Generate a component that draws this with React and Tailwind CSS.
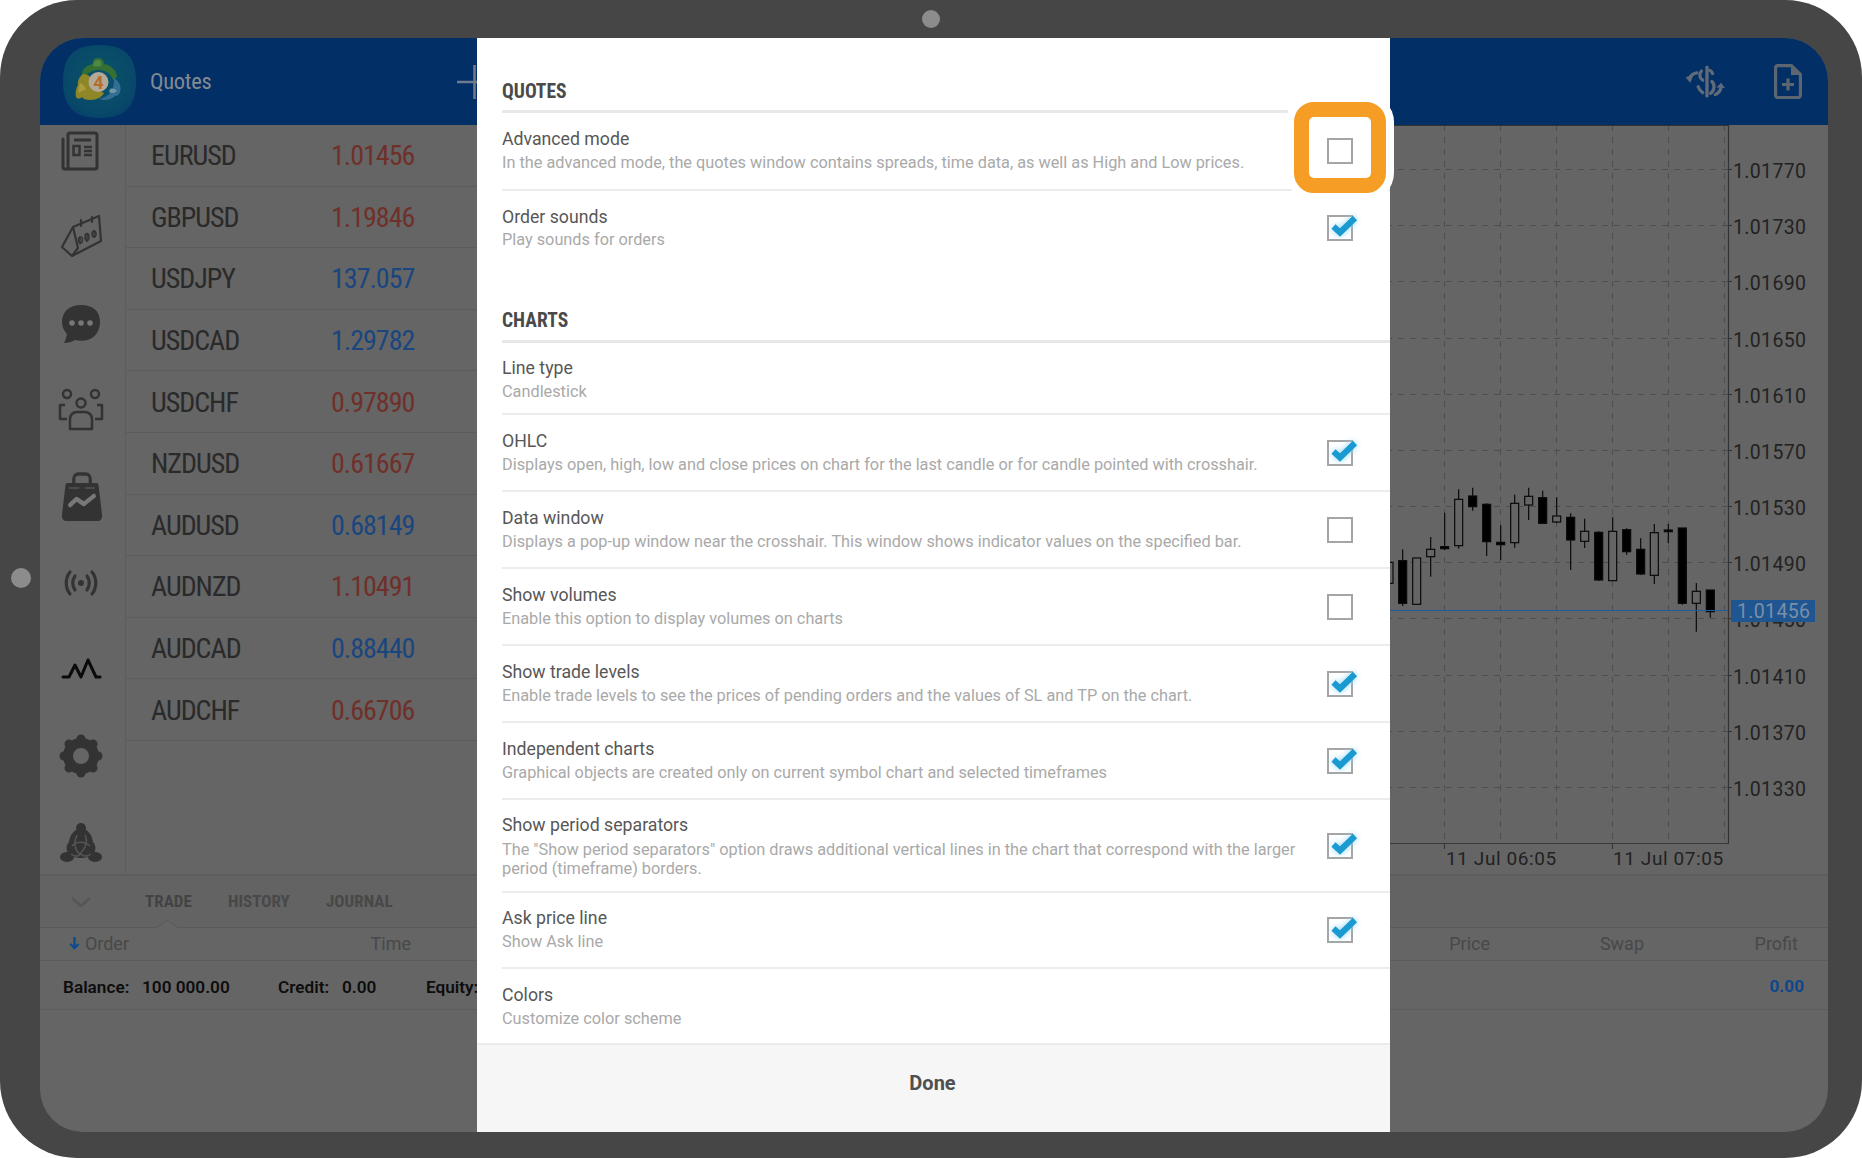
const cond = "[font-stretch:75%]";

const QUOTES = [
  ["EURUSD", "1.01456", "r"],
  ["GBPUSD", "1.19846", "r"],
  ["USDJPY", "137.057", "b"],
  ["USDCAD", "1.29782", "b"],
  ["USDCHF", "0.97890", "r"],
  ["NZDUSD", "0.61667", "r"],
  ["AUDUSD", "0.68149", "b"],
  ["AUDNZD", "1.10491", "r"],
  ["AUDCAD", "0.88440", "b"],
  ["AUDCHF", "0.66706", "r"],
];

const CANDLES = [
  [27, 307, 370, 307, 370, 0],
  [68, 268, 438, 302, 430, 1],
  [110, 294, 433, 294, 433, 0],
  [152, 231, 350, 268, 290, 0],
  [194, 158, 270, 260, 266, 1],
  [236, 88, 266, 118, 257, 0],
  [278, 83, 152, 108, 140, 1],
  [320, 130, 288, 133, 245, 1],
  [362, 196, 300, 247, 254, 1],
  [404, 104, 263, 130, 248, 0],
  [446, 83, 180, 109, 135, 0],
  [488, 92, 190, 113, 190, 1],
  [530, 112, 190, 168, 186, 0],
  [572, 160, 330, 172, 240, 1],
  [614, 176, 264, 214, 244, 0],
  [656, 214, 363, 217, 360, 1],
  [698, 172, 363, 214, 362, 0],
  [740, 205, 284, 209, 275, 1],
  [782, 235, 345, 268, 342, 1],
  [823, 192, 372, 218, 346, 0],
  [865, 192, 250, 210, 215, 1],
  [907, 204, 434, 204, 430, 1],
  [949, 369, 515, 394, 430, 0],
  [991, 390, 473, 390, 455, 1],
];

const PRICES = [
  ["1.01770", 169], ["1.01730", 225], ["1.01690", 281], ["1.01650", 338], ["1.01610", 394], ["1.01570", 450],
  ["1.01530", 506], ["1.01490", 562], ["1.01450", 618], ["1.01410", 675], ["1.01370", 731], ["1.01330", 787],
];

function Chart() {
  const vx = [1444, 1500, 1556, 1612, 1668, 1724];
  return (
    <svg viewBox="486 125 1342 748" className="block w-full h-full" style={{ fontFamily: "Roboto, sans-serif" }}>
      {PRICES.map(([p, y]) => (
        <g key={p}>
          <line x1="486" x2="1728" y1={y + 0.5} y2={y + 0.5} stroke="#4e4e4e" strokeWidth="1" strokeDasharray="6 6" />
          <line x1="1728" x2="1732" y1={y + 0.5} y2={y + 0.5} stroke="#2e2e2e" strokeWidth="1" />
        </g>
      ))}
      {vx.map((x) => (
        <line key={x} x1={x + 0.5} x2={x + 0.5} y1="125" y2="844" stroke="#4e4e4e" strokeWidth="1" strokeDasharray="6 6" />
      ))}
      <line x1="486" x2="1729" y1="125.5" y2="125.5" stroke="#333" strokeWidth="1" />
      <line x1="486" x2="1729" y1="843.5" y2="843.5" stroke="#3a3a3a" strokeWidth="1.2" />
      <line x1="1728.5" x2="1728.5" y1="125" y2="844" stroke="#333" strokeWidth="1.2" />
      <line x1="1444.5" x2="1444.5" y1="844" y2="849" stroke="#333" />
      <line x1="1612.5" x2="1612.5" y1="844" y2="849" stroke="#333" />
      {CANDLES.map(([cx, wt, wb, bt, bb, f]) => {
        const x = 1380 + cx / 3;
        return (
          <g key={cx}>
            <line x1={x} x2={x} y1={460 + wt / 3} y2={460 + wb / 3} stroke="#0a0a0a" strokeWidth="1.2" />
            <rect x={x - 4} y={460 + bt / 3} width="8" height={Math.max((bb - bt) / 3, 1)} fill={f ? "#000" : "#656565"} stroke="#0a0a0a" strokeWidth="1.2" />
          </g>
        );
      })}
      <line x1="486" x2="1728" y1="610.5" y2="610.5" stroke="#1f5c9e" strokeWidth="1.2" />
      {PRICES.map(([p, y]) => (
        <text key={p} x="1733" y={y + 8.5} fontSize="19.5" letterSpacing="0.35" fill="#222">{p}</text>
      ))}
      <rect x="1731" y="600" width="84" height="22" fill="#1f5590" />
      <text x="1737" y="618" fontSize="19.5" letterSpacing="0.35" fill="#7a90a9">1.01456</text>
      <text x="1446" y="865" fontSize="19" letterSpacing="0.6" fill="#222">11 Jul 06:05</text>
      <text x="1613" y="865" fontSize="19" letterSpacing="0.6" fill="#222">11 Jul 07:05</text>
    </svg>
  );
}

function Logo() {
  return (
    <svg viewBox="0 0 73 73" className="w-[73px] h-[73px] shrink-0">
      <defs>
        <radialGradient id="lg" cx="0.5" cy="0.45" r="0.7">
          <stop offset="0" stopColor="#0a5568" />
          <stop offset="0.7" stopColor="#084869" />
          <stop offset="1" stopColor="#04386b" />
        </radialGradient>
      </defs>
      <path d="M36.500 0C62 0 73 11 73 36.500C73 62 62 73 36.500 73C11 73 0 62 0 36.500C0 11 11 0 36.500 0Z" fill="url(#lg)" />
      <path d="M35 13c4 0 6 3 6 6 7 1 13 7 13 13l-4 3c-3-8-9-10-15-10s-11 3-13 8c-2-1-3-3-3-5 1-5 6-8 11-9-1-3 1-6 5-6Z" fill="#347034" />
      <path d="M35 15c3 0 4 3 3 6-3 1-6 1-8 0 0-3 2-6 5-6Z" fill="#4f8744" />
      <path d="M20 29c3 0 6 1 8 4 3 6 7 12 13 15-2 4-7 7-14 7-4 0-7-1-8-3-2 2-5 2-6 0-1-4 0-9 2-12-1-4 2-9 5-11Z" fill="#8f8628" />
      <path d="M17 38c3 1 5 3 6 7-3 0-5 1-7 3-1-3 0-7 1-10Z" fill="#a89c3c" />
      <path d="M51 33c5 3 8 9 6 14-1 3-3 4-5 4-4 4-10 5-16 3 8-2 13-6 14-12 1-3 1-6 1-9Z" fill="#336d96" />
      <path d="M47 44c3-1 6 0 7 2-2 2-5 3-8 1Z" fill="#6f95a9" />
      <circle cx="35.500" cy="37" r="10" fill="#b3a99b" />
      <text x="35.500" y="43.500" textAnchor="middle" fontSize="18" fontWeight="700" fill="#b96c28" style={{ fontFamily: "Roboto, sans-serif" }}>4</text>
    </svg>
  );
}

const ic = "w-[48px] h-[44px] shrink-0";
function SideIcons() {
  const s = "#333333";
  return (
    <>
      <svg viewBox="0 0 48 44" className={ic} fill="none" stroke={s}>
        <path d="M6 10v28a2 2 0 0 0 2 2h4" strokeWidth="3" strokeLinecap="round" />
        <rect x="11" y="4" width="29" height="36" rx="2" strokeWidth="3" />
        <path d="M17 11h17" strokeWidth="3" />
        <rect x="16.500" y="17" width="6" height="9" strokeWidth="2.500" />
        <path d="M27 18h8M27 22h8M27 26h8" strokeWidth="2.500" />
      </svg>
      <svg viewBox="0 0 48 44" className={ic} fill="none" stroke={s} strokeWidth="2.200" strokeLinejoin="round">
        <path d="M5 32 16 12 42 1 44 26 15 41 5 32Z" />
        <path d="M16 12 21 33 15 41" />
        <path d="M24 5v6M35 2v5" strokeLinecap="round" />
        <path d="M23 21.500v8M30 18v9M37 15v8" strokeWidth="1.500" />
        <ellipse cx="23.500" cy="25" rx="2" ry="3" strokeWidth="1.500" />
        <ellipse cx="30" cy="22" rx="2" ry="3.500" strokeWidth="1.500" />
        <ellipse cx="37" cy="19" rx="2" ry="3" strokeWidth="1.500" />
      </svg>
      <svg viewBox="0 0 48 44" className={ic}>
        <path d="M24 3C12 3 5 10 5 20c0 5 2 9 5 12-.5 3-2 7-3 9 4 0 8-1 11-3 2 .6 4 .8 6 .8 12 0 19-8 19-18.800S36 3 24 3Z" fill={s} />
        <circle cx="15" cy="21" r="2.800" fill="#777" />
        <circle cx="24" cy="21" r="2.800" fill="#777" />
        <circle cx="33" cy="21" r="2.800" fill="#777" />
      </svg>
      <svg viewBox="0 0 48 44" className={ic} fill="none" stroke={s} strokeWidth="2.500">
        <circle cx="10" cy="6" r="4" />
        <circle cx="38" cy="6" r="4" />
        <circle cx="24" cy="15" r="4.500" />
        <path d="M8 17H3v14h7M40 17h5v14h-7" strokeLinejoin="round" />
        <path d="M13 41V31c0-4 3-7 7-7h8c4 0 7 3 7 7v10H13Z" strokeLinejoin="round" />
      </svg>
      <svg viewBox="0 0 48 50" preserveAspectRatio="none" className="w-[44px] h-[50px] -my-[3px] ml-[3px] shrink-0">
        <path d="M8 11h32c1 0 2 1 2 2l4 31c0 3-2 5-5 5H7c-3 0-5-2-5-5l4-31c0-1 1-2 2-2Z" fill={s} />
        <path d="M15 16V7c0-3 2-5 5-5h8c3 0 5 2 5 5v9" fill="none" stroke={s} strokeWidth="3.500" />
        <path d="M10 16h11M27 16h11" stroke="#666" strokeWidth="1" />
        <path d="M11 33l7-6 8 5 11-8" fill="none" stroke="#777" strokeWidth="4.500" strokeLinecap="round" strokeLinejoin="round" />
      </svg>
      <svg viewBox="0 0 48 44" className={ic} fill="none" stroke={s} strokeWidth="3.200" strokeLinecap="round">
        <circle cx="24" cy="22" r="3" fill={s} stroke="none" />
        <path d="M18 15c-3 4-3 10 0 14M30 15c3 4 3 10 0 14" />
        <path d="M13 11C8 17 8 27 13 33M35 11c5 6 5 16 0 22" />
      </svg>
      <svg viewBox="0 0 48 44" className={ic} fill="none" stroke="#0a0a0a" strokeWidth="3" strokeLinecap="round" strokeLinejoin="round">
        <path d="M6 30h6l6-12 6 12 7-17 8 17h4" />
      </svg>
      <svg viewBox="0 0 48 44" className={ic}>
        <circle cx="24" cy="22" r="13" fill="none" stroke={s} strokeWidth="10" />
        {[0, 45, 90, 135, 180, 225, 270, 315].map((a) => (
          <line key={a} x1="24" y1="6" x2="24" y2="5" stroke={s} strokeWidth="9" strokeLinecap="round" transform={`rotate(${a} 24 22)`} />
        ))}
      </svg>
      <svg viewBox="0 0 48 44" className={ic}>
        <circle cx="24" cy="8" r="5" fill={s} />
        <path d="M24 8c6 1 11 6 12 14 3 3 3 8 1 11-4 4-9 5-13 5s-9-1-13-5c-2-3-2-8 1-11 1-8 6-13 12-14Z" fill={s} />
        <ellipse cx="10" cy="37" rx="7" ry="5" fill={s} />
        <ellipse cx="38" cy="37" rx="7" ry="5" fill={s} />
        <path d="M15 26c4-5 13-5 18 0M20 15c-3 6-3 13 2 19M28 15c3 6 1 14-6 19M14 34c4 3 7 3 10 0 3 3 6 3 10 0" fill="none" stroke="#555" strokeWidth="1.500" />
      </svg>
    </>
  );
}

function Check({ on }) {
  return (
    <div className="relative w-[26px] h-[26px] border-2 border-[#a5a5a5] shrink-0">
      {on && (
        <svg viewBox="0 0 34 24" className="absolute -left-[2px] -top-[2px] w-[34px] h-[24px] overflow-visible drop-shadow-[0_0_3px_#8fd6f5]" fill="none" stroke="#1b9ad1" strokeWidth="6">
          <path d="M6.500 11.500l6.500 6L28 3" />
        </svg>
      )}
    </div>
  );
}

function Row({ title, sub, on, h, last, box = true, text = "mb-[2px]", gap = "mt-[2px]" }) {
  return (
    <div className={`${h} ml-[25px] pr-[37px] flex items-center ${last ? "" : "border-b-2 border-[#ececec]"}`}>
      <div className={`flex-1 ${text}`}>
        <div className="text-[17.700px] leading-[23px] text-[#575757]">{title}</div>
        <div className={`${gap} text-[16.300px] leading-[19px] text-[#a9a9a9]`}>{sub}</div>
      </div>
      {box && <Check on={on} />}
    </div>
  );
}

function Modal() {
  return (
    <div className="absolute left-[437px] top-0 w-[913px] h-[1094px] bg-white flex flex-col">
      <div className="h-[75px] ml-[25px] flex items-end border-b-[3px] border-[#e8e8e8] pb-[6px]">
        <span className={`text-[19.500px] leading-[24px] font-bold text-[#4a4a4a] ${cond}`}>QUOTES</span>
      </div>
      <Row h="h-[78px]" title="Advanced mode" sub="In the advanced mode, the quotes window contains spreads, time data, as well as High and Low prices." />
      <Row h="h-[74px]" last on text="mb-[1px]" gap="mt-[1px]" title="Order sounds" sub="Play sounds for orders" />
      <div className="h-[78px] ml-[25px] flex items-end border-b-[3px] border-[#e8e8e8] pb-[7px]">
        <span className={`text-[19.500px] leading-[24px] font-bold text-[#4a4a4a] ${cond}`}>CHARTS</span>
      </div>
      <Row h="h-[72px]" box={false} text="mt-[2px]" title="Line type" sub="Candlestick" />
      <Row h="h-[77px]" on title="OHLC" sub="Displays open, high, low and close prices on chart for the last candle or for candle pointed with crosshair." />
      <Row h="h-[77px]" title="Data window" sub="Displays a pop-up window near the crosshair. This window shows indicator values on the specified bar." />
      <Row h="h-[77px]" title="Show volumes" sub="Enable this option to display volumes on charts" />
      <Row h="h-[77px]" on title="Show trade levels" sub="Enable trade levels to see the prices of pending orders and the values of SL and TP on the chart." />
      <Row h="h-[77px]" on title="Independent charts" sub="Graphical objects are created only on current symbol chart and selected timeframes" />
      <Row
        h="h-[93px]"
        on
        text=""
        gap="mt-[3px]"
        title="Show period separators"
        sub={
          <>
            The "Show period separators" option draws additional vertical lines in the chart that correspond with the larger
            <br />
            period (timeframe) borders.
          </>
        }
      />
      <Row h="h-[76px]" on title="Ask price line" sub="Show Ask line" />
      <Row h="h-[74px]" last box={false} text="" title="Colors" sub="Customize color scheme" />
      <div className="flex-1 bg-[#f6f6f6] border-t-2 border-[#ebebeb] flex items-center justify-center pb-[11px] pr-[2px]">
        <span className="text-[20px] font-bold text-[#4f4f4f]">Done</span>
      </div>
      <div className="absolute left-[817px] top-[64px] w-[92px] h-[91px] rounded-[20px] border-[15px] border-[#f59d24] shadow-[0_0_0_8px_white]" />
    </div>
  );
}

export default function App() {
  return (
    <div className="relative w-[1862px] h-[1158px] bg-white overflow-hidden" style={{ fontFamily: "Roboto, 'Liberation Sans', sans-serif" }}>
      <div className="w-full h-full rounded-[77px] bg-[#464646] pt-[38px] pl-[40px] pr-[34px] pb-[26px]">
        <div className="relative w-[1788px] h-[1094px] rounded-[43px] overflow-hidden bg-[#656565] flex flex-col">
          <header className="h-[87px] shrink-0 bg-[#012f66] flex items-center pl-[23px] pr-[26px]">
            <Logo />
            <span className={`ml-[14px] text-[22.500px] tracking-[-0.3px] text-[#858a92] ${cond}`}>Quotes</span>
            <svg viewBox="0 0 24 34" className="ml-[246px] w-[24px] h-[34px] shrink-0" stroke="#6e7d8e" strokeWidth="2.500">
              <path d="M0 17h24M17.500 0v34" />
            </svg>
            <svg viewBox="30 12 128 100" className="ml-auto w-[42px] h-[33px]" fill="none" stroke="#5f6b79" strokeWidth="10" strokeLinecap="round">
              <path d="M97 18V106" />
              <path d="M80 30c-8 10-6 22 4 28" />
              <path d="M105 28c5 2 8 6 9 10" />
              <path d="M112 62c10 10 8 28-4 36" />
              <path d="M70 78c3 8 8 14 14 18" />
              <path d="M66 36c-12 2-20 9-22 18" />
              <path d="M122 102c9-4 16-12 18-22" />
              <path d="M32 50l26-12-12 28ZM152 82l-26-2 14-14Z" fill="#5f6b79" stroke="none" />
            </svg>
            <svg viewBox="0 0 28 35" className="ml-[47px] w-[28px] h-[35px]" fill="none" stroke="#5d6670" strokeWidth="3.200">
              <path d="M3.500 1.600h14L26.400 10.500v20.500a2.500 2.500 0 0 1-2.500 2.500H4A2.500 2.500 0 0 1 1.600 31V4A2.500 2.500 0 0 1 3.500 1.600Z" strokeLinejoin="round" />
              <path d="M17 2l9 9h-9Z" fill="#5d6670" stroke="none" />
              <path d="M14 14.500v12M8 20.500h12" />
            </svg>
          </header>

          <div className="h-[748px] shrink-0 flex">
            <nav className="w-[86px] shrink-0 border-r border-[#5c5c5c] flex flex-col items-center pt-[4px] pr-[4px] gap-[42.400px] overflow-hidden">
              <SideIcons />
            </nav>
            <div className="w-[360px] shrink-0">
              {QUOTES.map(([s, p, c]) => (
                <div key={s} className="h-[61.600px] border-b border-[#5c5c5c] pl-[25px] flex items-center text-[28px] tracking-[-1px] pt-[2px]">
                  <span className={`w-[180px] text-[#2a2a2a] ${cond}`}>{s}</span>
                  <span className={`w-[81px] text-right ${c === "r" ? "text-[#70302a]" : "text-[#1a4680]"} ${cond}`}>{p}</span>
                </div>
              ))}
            </div>
            <div className="flex-1 min-w-0">
              <Chart />
            </div>
          </div>

          <div className="shrink-0 border-t-2 border-[#5c5c5c] mt-[1px]" />
          <div className="relative h-[52px] shrink-0 bg-[#636363] border-b border-[#5a5a5a] flex items-center">
            <svg viewBox="0 0 20 10" className="ml-[31px] w-[20px] h-[10px]" fill="none" stroke="#565656" strokeWidth="2.500">
              <path d="M1 1l9 8 9-8" />
            </svg>
            <div className={`ml-[54px] flex text-[17px] font-bold text-[#434343] ${cond}`}>
              <span className="w-[83px]">TRADE</span>
              <span className="w-[98px] text-[#484848]">HISTORY</span>
              <span className="text-[#484848]">JOURNAL</span>
            </div>
            <svg viewBox="0 0 22 8" className="absolute left-[116px] bottom-[-1px] w-[22px] h-[8px]" fill="#656565" stroke="#5a5a5a">
              <path d="M0 8 11 0l11 8" />
            </svg>
          </div>
          <div className="h-[33px] shrink-0 border-b border-[#5c5c5c] flex items-center text-[18px] text-[#484848] pb-[2px]">
            <div className="w-[89px] flex justify-end items-center">
              <svg viewBox="0 0 12 14" className="mr-[5px] w-[11px] h-[13px]" fill="none" stroke="#0e4a8e" strokeWidth="2.500">
                <path d="M6 0v12M1.500 7.500 6 12l4.500-4.500" />
              </svg>
              Order
            </div>
            <div className="w-[282px] text-right">Time</div>
            <div className="w-[1079px] text-right">Price</div>
            <div className="w-[154px] text-right">Swap</div>
            <div className="w-[154px] text-right">Profit</div>
          </div>
          <div className="h-[49px] shrink-0 border-b border-[#5c5c5c] flex items-center pl-[23px] pt-[5px] text-[17.200px] font-semibold text-[#0d0d0d]">
            <span className="w-[79px]">Balance:</span>
            <span className="w-[136px]">100 000.00</span>
            <span className="w-[64px]">Credit:</span>
            <span className="w-[84px]">0.00</span>
            <span>Equity:</span>
            <span className="ml-auto mr-[24px] -mt-[1px] font-bold text-[#0e478c]">0.00</span>
          </div>
          <div className="flex-1" />

          <Modal />
        </div>
      </div>
      <div className="absolute left-[922px] top-[10px] w-[18px] h-[18px] rounded-full bg-[#8c8c8c]" />
      <div className="absolute left-[11px] top-[568px] w-[20px] h-[20px] rounded-full bg-[#8c8c8c]" />
    </div>
  );
}
